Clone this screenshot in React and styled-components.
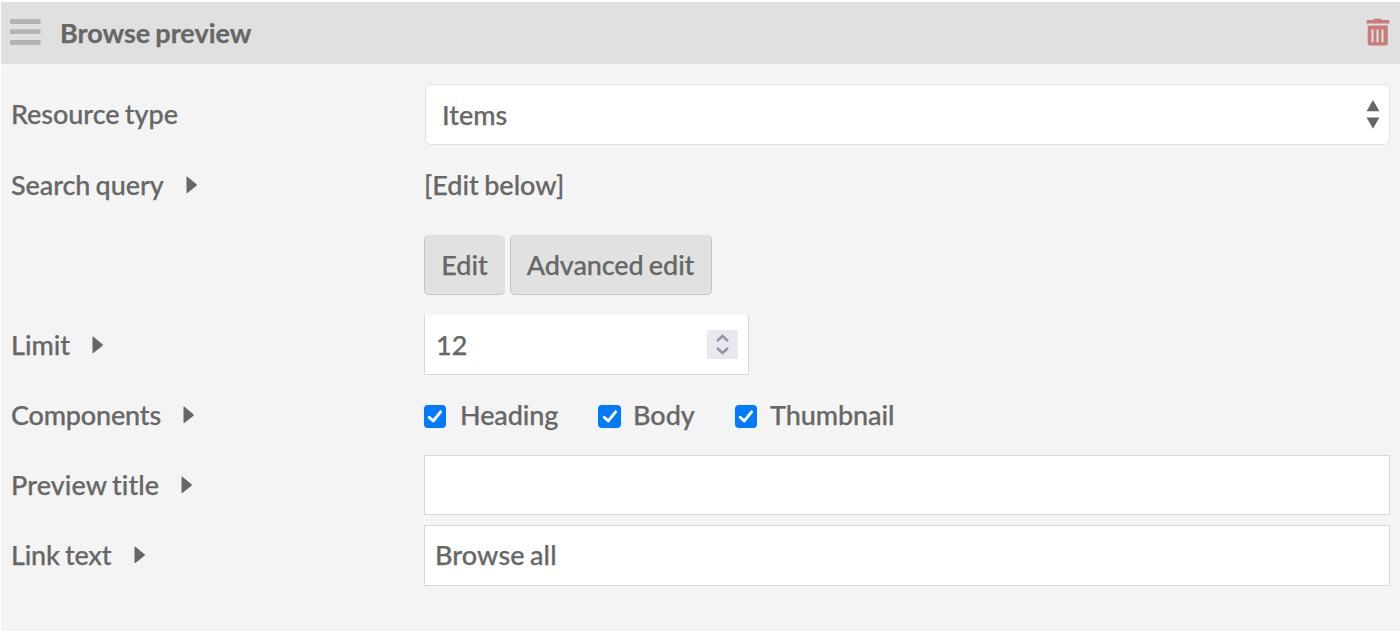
import React from "react";
import styled, { createGlobalStyle } from "styled-components";

const GlobalStyle = createGlobalStyle`
  * { box-sizing: border-box; }
  html, body { margin: 0; background: #fff; overflow: hidden; }
  body, input, button {
    font-family: Lato, "Liberation Sans", sans-serif;
    font-size: 27px;
    font-weight: 500;
    line-height: 34px;
    word-spacing: -1.5px;
    font-variant-ligatures: none;
    -webkit-text-stroke: 0.25px #676767;
    color: #676767;
  }
`;

const Block = styled.section`
  height: 631px;
  padding: 2px 0 0 1px;
  display: flex;
  flex-direction: column;
`;

const Header = styled.header`
  height: 62px;
  flex: none;
  display: flex;
  align-items: center;
  padding: 0 10px 2px 9px;
  background: #e0e0e0;
`;

const Title = styled.h2`
  flex: 1;
  margin: 2px 0 0 19px;
  font-size: 27px;
  font-weight: 700;
  line-height: 34px;
  letter-spacing: 0;
`;

const Form = styled.div`
  flex: 1;
  padding: 14px 10px 0;
  border-top: 1px solid #f8f8f8;
  background: #f4f4f4;
`;

const Row = styled.div`
  display: grid;
  grid-template-columns: 413px 1fr;
  align-items: center;
  height: ${(p) => p.$height || 70}px;
`;

const Label = styled.div`
  display: flex;
  align-items: center;
  gap: ${(p) => p.$gap}px;
  padding-bottom: ${(p) => p.$lift || 0}px;
  white-space: nowrap;
`;

const Words = styled.span`
  letter-spacing: ${(p) => p.$track || 0}px;
  white-space: nowrap;
`;

const Select = styled.div`
  height: 61px;
  display: flex;
  align-items: center;
  justify-content: space-between;
  margin-left: 1px;
  padding: 0 9px 0 16px;
  border: 1px solid #e2e2e2;
  border-radius: 6px;
  background: #fff;
`;

const Buttons = styled.div`
  display: flex;
  gap: 5px;
`;

const Button = styled.button`
  width: ${(p) => p.$width}px;
  height: 60px;
  padding: 0 1px 0 0;
  white-space: nowrap;
  border: solid #c4c4c4;
  border-width: 0 ${(p) => (p.$edge ? 1 : 0)}px 1px 1px;
  border-radius: 5px;
  background: #e1e1e1;
  letter-spacing: ${(p) => p.$track || 0}px;
`;

const Input = styled.input`
  width: 100%;
  height: ${(p) => p.$height || 60}px;
  padding: 0 10px ${(p) => p.$lift || 0}px;
  border: 1px solid #d8d8d8;
  border-radius: 0;
  outline: 0;
  background: #fff;
  letter-spacing: ${(p) => p.$track || 0}px;
`;

const NumberField = styled.div`
  width: 325px;
  height: 60px;
  display: flex;
  align-items: center;
  justify-content: space-between;
  padding: 0 10px 0 11px;
  border: solid #d8d8d8;
  border-width: 0 1px 1px;
  background: #fff;
`;

const Stepper = styled.span`
  width: 31px;
  height: 29px;
  display: flex;
  align-items: center;
  justify-content: center;
  background: #e9e8ee;
`;

const Checks = styled.div`
  display: flex;
  align-items: center;
`;

const Check = styled.label`
  display: flex;
  align-items: center;
  width: ${(p) => p.$width}px;
  gap: ${(p) => p.$gap}px;
`;

const Box = styled.span`
  width: ${(p) => p.$width || 22}px;
  height: 23px;
  margin-top: 3px;
  display: flex;
  align-items: center;
  justify-content: center;
  flex: none;
  border-radius: 4px;
  background: #007aff;
`;

const Caret = () => (
  <svg width="12" height="18" viewBox="0 0 12 18" fill="#676767">
    <path d="M.5 1.5Q.5 0 1.7 1L10.5 8.2Q11.3 9 10.5 9.8L1.7 16.8Q.5 17.7.5 16.3Z" />
  </svg>
);

const Bars = () => (
  <svg width="31" height="27" viewBox="0 0 31 27" fill="#b3b3b3">
    <rect width="30.6" height="5" rx="1" />
    <rect y="10.3" width="30.6" height="4.7" rx="1" />
    <rect y="21" width="30.6" height="5" rx="1" />
  </svg>
);

const Trash = () => (
  <svg width="24" height="28" viewBox="0 0 24 28" fill="#c97c7c">
    <path d="M7.5 2L8 .8h7L15.700 2H22q1.4 0 1.4 1.200V5.500H.5V3.200Q.5 2 2 2z" />
    <path
      fillRule="evenodd"
      d="M1.7 7.500h20.1v18.3q0 1.7-1.7 1.7H3.4q-1.7 0-1.7-1.7zM5.500 11.500v12.7h2V11.500zm5 0v12.7h2V11.500zm5 0v12.7h2V11.500z"
    />
  </svg>
);

const SortArrows = () => (
  <svg width="14" height="29" viewBox="0 0 14 29" fill="#676767">
    <path d="M7 0L13.4 11.3H.6zM.6 17.5H13.4L7 28.7z" />
  </svg>
);

const Tick = () => (
  <svg width="16" height="15" viewBox="0 0 16 15" fill="none" stroke="#fff" strokeWidth="2.9" strokeLinecap="round" strokeLinejoin="round">
    <path d="M2.2 8.2L6.2 12L13.6 2.8" />
  </svg>
);

const Field = ({ label, track, gap = 22, lift, caret = true, height, children }) => (
  <Row $height={height}>
    <Label $gap={gap} $lift={lift}>
      <Words $track={track}>{label}</Words>
      {caret && <Caret />}
    </Label>
    {children}
  </Row>
);

export default function App() {
  return (
    <Block>
      <GlobalStyle />
      <Header>
        <Bars />
        <Title>Browse preview</Title>
        <Trash />
      </Header>
      <Form>
        <Field label="Resource type" caret={false} height={71} track={-0.05} lift={2}>
          <Select>
            <Words>Items</Words>
            <SortArrows />
          </Select>
        </Field>
        <Field label="Search query" track={-0.08}>
          <Words>[Edit below]</Words>
        </Field>
        <Row $height={90}>
          <span />
          <Buttons>
            <Button $width={81}>Edit</Button>
            <Button $width={202} $track={-0.1} $edge>Advanced edit</Button>
          </Buttons>
        </Row>
        <Field label="Limit">
          <NumberField>
            <Words>12</Words>
            <Stepper>
              <svg width="13" height="21" viewBox="0 0 13 21" fill="none" stroke="#9795a4" strokeWidth="2.5">
                <path d="M1 7L6.5 2L12 7M1 14L6.5 19L12 14" />
              </svg>
            </Stepper>
          </NumberField>
        </Field>
        <Field label="Components" track={-0.18}>
          <Checks>
            <Check $width={174} $gap={14}><Box><Tick /></Box><Words $track={-0.1}>Heading</Words></Check>
            <Check $width={137} $gap={12}><Box $width={23}><Tick /></Box><Words>Body</Words></Check>
            <Check $gap={13}><Box><Tick /></Box><Words $track={-0.08}>Thumbnail</Words></Check>
          </Checks>
        </Field>
        <Field label="Preview title" track={0.08}>
          <Input aria-label="Preview title" />
        </Field>
        <Field label="Link text" track={-0.18} gap={23}>
          <Input aria-label="Link text" $height={61} $lift={2} $track={0.1} defaultValue="Browse all" />
        </Field>
      </Form>
    </Block>
  );
}
